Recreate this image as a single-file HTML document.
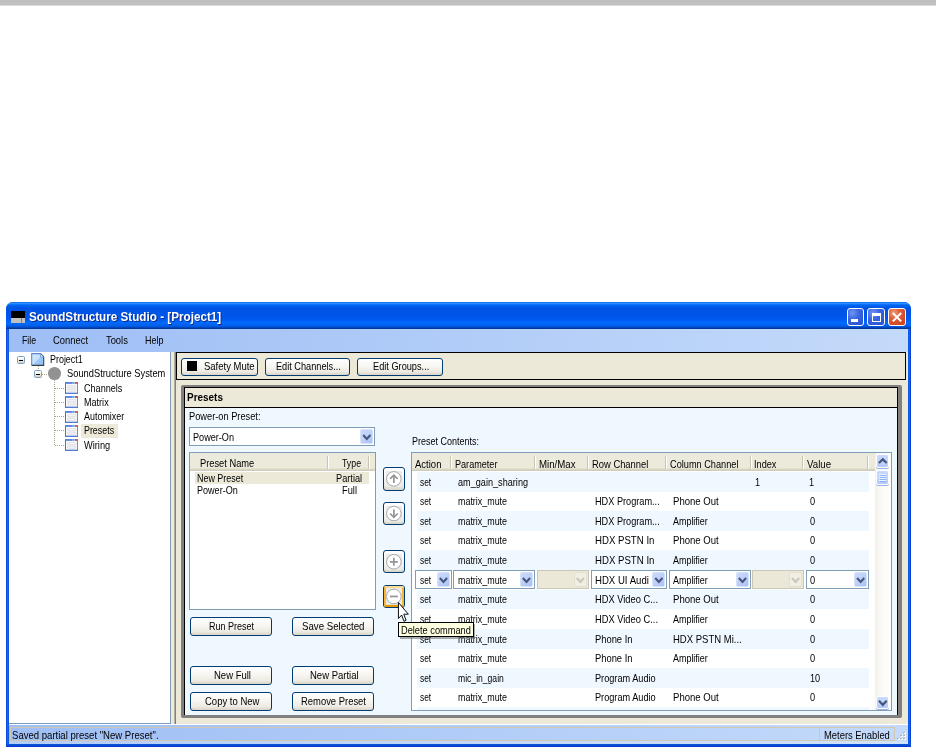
<!DOCTYPE html>
<html><head><meta charset="utf-8"><title>SoundStructure Studio - [Project1]</title>
<style>
html,body{margin:0;padding:0;background:#fff;}
body{width:936px;height:747px;position:relative;overflow:hidden;font-family:"Liberation Sans",sans-serif;font-size:10.5px;color:#000;}
div{box-sizing:border-box;}
#root{position:absolute;left:0;top:0;width:936px;height:747px;will-change:transform;}
.t{position:absolute;white-space:nowrap;line-height:14px;height:14px;transform-origin:0 50%;}
svg{position:absolute;overflow:visible;}
</style></head><body><div id="root">
<div style="position:absolute;left:0.00px;top:0.00px;width:936.00px;height:5.00px;background:#c0c0c0;"></div>
<div style="position:absolute;left:0.00px;top:5.00px;width:936.00px;height:1.00px;background:#dcdcdc;"></div>
<div style="position:absolute;left:6.00px;top:302.00px;width:905.00px;height:448.00px;background:#0a55e0;border-radius:7px 7px 0 0;"></div>
<div style="position:absolute;left:6.00px;top:302.00px;width:905.00px;height:27.00px;background:linear-gradient(to bottom,#0058ee 0%,#3593ff 4%,#288eff 6%,#127dff 8%,#036ffc 10%,#0262ee 14%,#0057e5 20%,#0054e3 24%,#0055eb 56%,#005bf5 66%,#026afe 76%,#0062ef 86%,#0052d6 92%,#0040ab 96%,#003092 100%);border-radius:7px 7px 0 0;"></div>
<div style="position:absolute;left:6.00px;top:329.00px;width:3.00px;height:418.00px;background:linear-gradient(to right,#0831d9 0%,#166aee 40%,#0855dd 100%);"></div>
<div style="position:absolute;left:908.00px;top:329.00px;width:3.00px;height:418.00px;background:linear-gradient(to right,#0855dd 0%,#166aee 40%,#0831d9 100%);"></div>
<div style="position:absolute;left:6.00px;top:744.00px;width:905.00px;height:3.00px;background:linear-gradient(to bottom,#0855dd 0%,#0a4ad0 50%,#0831d9 100%);"></div>
<div style="position:absolute;left:11.00px;top:311.00px;width:14.00px;height:7.00px;background:#000;"></div>
<div style="position:absolute;left:11.00px;top:318.00px;width:14.00px;height:5.00px;background:#c0c0c0;"></div>
<div style="position:absolute;left:21.00px;top:318.00px;width:1.30px;height:5.00px;background:#00e000;"></div>
<div class="t" style="left:28.80px;top:310.20px;font-size:12.60px;transform:scaleX(0.9279);font-weight:bold;color:#fff;text-shadow:1px 1px 0 #0a2a8a;">SoundStructure Studio - [Project1]</div>
<div style="position:absolute;left:846.60px;top:308.00px;width:17.60px;height:18.40px;background:radial-gradient(circle at 30% 25%,#6f97f5 0%,#3a66e0 40%,#2450d0 100%);border:1px solid #fff;border-radius:3px;"></div>
<div style="position:absolute;left:867.00px;top:308.00px;width:18.40px;height:18.40px;background:radial-gradient(circle at 30% 25%,#6f97f5 0%,#3a66e0 40%,#2450d0 100%);border:1px solid #fff;border-radius:3px;"></div>
<div style="position:absolute;left:887.60px;top:308.00px;width:18.00px;height:18.40px;background:radial-gradient(circle at 30% 25%,#f0a080 0%,#e0603a 35%,#c83a14 100%);border:1px solid #fff;border-radius:3px;"></div>
<div style="position:absolute;left:851.00px;top:319.00px;width:6.50px;height:3.00px;background:#fff;"></div>
<div style="position:absolute;left:871.50px;top:312.50px;width:9.50px;height:9.50px;border:1.2px solid #fff;border-top:3px solid #fff;"></div>
<svg style="left:887.6px;top:308px" width="18" height="18.4" viewBox="0 0 18 18.4"><path d="M4.8 5 L13.2 13.4 M13.2 5 L4.8 13.4" stroke="#fff" stroke-width="2" fill="none" stroke-linecap="butt"/></svg>
<div style="position:absolute;left:9.00px;top:329.00px;width:899.00px;height:22.50px;background:linear-gradient(to right,#9ebef5 0%,#c4dafa 100%);"></div>
<div class="t" style="left:22.00px;top:332.60px;font-size:10.50px;transform:scaleX(0.8296);">File</div>
<div class="t" style="left:52.50px;top:332.60px;font-size:10.50px;transform:scaleX(0.8946);">Connect</div>
<div class="t" style="left:105.70px;top:332.60px;font-size:10.50px;transform:scaleX(0.8898);">Tools</div>
<div class="t" style="left:144.50px;top:332.60px;font-size:10.50px;transform:scaleX(0.8555);">Help</div>
<div style="position:absolute;left:9.00px;top:351.50px;width:899.00px;height:372.50px;background:#ece9d8;"></div>
<div style="position:absolute;left:9.00px;top:351.50px;width:162.00px;height:372.00px;background:#fff;border:1px solid #7f9db9;border-top:none;border-left:none;"></div>
<div style="position:absolute;left:173.60px;top:352.00px;width:2.10px;height:371.50px;background:linear-gradient(to right,#d4d0c0 0%,#8a867a 60%,#77746a 100%);"></div>
<div style="position:absolute;left:17.20px;top:356.00px;width:8.00px;height:8.00px;border:1px solid #7b9ec4;background:linear-gradient(to bottom,#fff 0%,#f4f1ea 45%,#d6cfbb 100%);border-radius:1.5px;"></div>
<div style="position:absolute;left:19.20px;top:359.50px;width:4.00px;height:1.00px;background:#000;"></div>
<div style="position:absolute;left:34.20px;top:370.20px;width:8.00px;height:8.00px;border:1px solid #7b9ec4;background:linear-gradient(to bottom,#fff 0%,#f4f1ea 45%,#d6cfbb 100%);border-radius:1.5px;"></div>
<div style="position:absolute;left:36.20px;top:373.70px;width:4.00px;height:1.00px;background:#000;"></div>
<svg style="left:0;top:0" width="936" height="747"><g stroke="#a9a08a" stroke-width="1" stroke-dasharray="1 1" fill="none"><path d="M38.5 366 V370"/><path d="M42 374.5 H49"/><path d="M54.5 380 V445.5"/><path d="M55 388.5 H65"/><path d="M55 402.5 H65"/><path d="M55 416.5 H65"/><path d="M55 430.5 H65"/><path d="M55 445.5 H65"/></g></svg>
<svg style="left:31px;top:353px" width="13.4" height="13" viewBox="0 0 13.4 13"><defs><linearGradient id="pg" x1="0" y1="0" x2="1" y2="1"><stop offset="0" stop-color="#d4ebfd"/><stop offset="0.5" stop-color="#c4e0fc"/><stop offset="0.52" stop-color="#9ccafa"/><stop offset="1" stop-color="#8fc0f6"/></linearGradient></defs><path d="M1.2 1 H9.4 L12.3 3.9 V12.2 H1.2 Z" fill="url(#pg)"/><path d="M0.7 12.4 V0.6 H9.6" fill="none" stroke="#5a86d2" stroke-width="1.1"/><path d="M9.6 0.6 L12.7 3.8 V12.4 H0.7" fill="none" stroke="#3a3f4c" stroke-width="1.1"/><path d="M9.4 0.8 V4 H12.5 Z" fill="#fff" stroke="#5a86d2" stroke-width="0.7"/></svg>
<div style="position:absolute;left:48.00px;top:367.20px;width:13.10px;height:12.90px;background:#929292;border-radius:50%;"></div>
<svg style="left:65.00px;top:382.20px" width="13" height="12" viewBox="0 0 13 12"><rect x="0.5" y="0.5" width="12" height="10.8" fill="#f9f9fc" stroke="#6a8fdc" stroke-width="1"/><rect x="0" y="10.8" width="13" height="1" fill="#4672cc"/><rect x="0" y="0.3" width="1" height="11" fill="#4672cc"/><rect x="0.2" y="0.2" width="12.6" height="1.7" fill="#5685e2"/><rect x="7.4" y="0.6" width="0.9" height="0.9" fill="#fff"/><rect x="9" y="0.6" width="0.9" height="0.9" fill="#fff"/><rect x="10.6" y="0.2" width="2" height="1.6" fill="#e8503a"/><rect x="2.6" y="3.8" width="8.2" height="1.9" rx="0.6" fill="#fff" stroke="#d2d2da" stroke-width="0.8"/><rect x="2.6" y="7.2" width="8.2" height="1.9" rx="0.6" fill="#fff" stroke="#d2d2da" stroke-width="0.8"/></svg>
<svg style="left:65.00px;top:396.40px" width="13" height="12" viewBox="0 0 13 12"><rect x="0.5" y="0.5" width="12" height="10.8" fill="#f9f9fc" stroke="#6a8fdc" stroke-width="1"/><rect x="0" y="10.8" width="13" height="1" fill="#4672cc"/><rect x="0" y="0.3" width="1" height="11" fill="#4672cc"/><rect x="0.2" y="0.2" width="12.6" height="1.7" fill="#5685e2"/><rect x="7.4" y="0.6" width="0.9" height="0.9" fill="#fff"/><rect x="9" y="0.6" width="0.9" height="0.9" fill="#fff"/><rect x="10.6" y="0.2" width="2" height="1.6" fill="#e8503a"/><rect x="2.6" y="3.8" width="8.2" height="1.9" rx="0.6" fill="#fff" stroke="#d2d2da" stroke-width="0.8"/><rect x="2.6" y="7.2" width="8.2" height="1.9" rx="0.6" fill="#fff" stroke="#d2d2da" stroke-width="0.8"/></svg>
<svg style="left:65.00px;top:410.60px" width="13" height="12" viewBox="0 0 13 12"><rect x="0.5" y="0.5" width="12" height="10.8" fill="#f9f9fc" stroke="#6a8fdc" stroke-width="1"/><rect x="0" y="10.8" width="13" height="1" fill="#4672cc"/><rect x="0" y="0.3" width="1" height="11" fill="#4672cc"/><rect x="0.2" y="0.2" width="12.6" height="1.7" fill="#5685e2"/><rect x="7.4" y="0.6" width="0.9" height="0.9" fill="#fff"/><rect x="9" y="0.6" width="0.9" height="0.9" fill="#fff"/><rect x="10.6" y="0.2" width="2" height="1.6" fill="#e8503a"/><rect x="2.6" y="3.8" width="8.2" height="1.9" rx="0.6" fill="#fff" stroke="#d2d2da" stroke-width="0.8"/><rect x="2.6" y="7.2" width="8.2" height="1.9" rx="0.6" fill="#fff" stroke="#d2d2da" stroke-width="0.8"/></svg>
<svg style="left:65.00px;top:424.80px" width="13" height="12" viewBox="0 0 13 12"><rect x="0.5" y="0.5" width="12" height="10.8" fill="#f9f9fc" stroke="#6a8fdc" stroke-width="1"/><rect x="0" y="10.8" width="13" height="1" fill="#4672cc"/><rect x="0" y="0.3" width="1" height="11" fill="#4672cc"/><rect x="0.2" y="0.2" width="12.6" height="1.7" fill="#5685e2"/><rect x="7.4" y="0.6" width="0.9" height="0.9" fill="#fff"/><rect x="9" y="0.6" width="0.9" height="0.9" fill="#fff"/><rect x="10.6" y="0.2" width="2" height="1.6" fill="#e8503a"/><rect x="2.6" y="3.8" width="8.2" height="1.9" rx="0.6" fill="#fff" stroke="#d2d2da" stroke-width="0.8"/><rect x="2.6" y="7.2" width="8.2" height="1.9" rx="0.6" fill="#fff" stroke="#d2d2da" stroke-width="0.8"/></svg>
<svg style="left:65.00px;top:439.00px" width="13" height="12" viewBox="0 0 13 12"><rect x="0.5" y="0.5" width="12" height="10.8" fill="#f9f9fc" stroke="#6a8fdc" stroke-width="1"/><rect x="0" y="10.8" width="13" height="1" fill="#4672cc"/><rect x="0" y="0.3" width="1" height="11" fill="#4672cc"/><rect x="0.2" y="0.2" width="12.6" height="1.7" fill="#5685e2"/><rect x="7.4" y="0.6" width="0.9" height="0.9" fill="#fff"/><rect x="9" y="0.6" width="0.9" height="0.9" fill="#fff"/><rect x="10.6" y="0.2" width="2" height="1.6" fill="#e8503a"/><rect x="2.6" y="3.8" width="8.2" height="1.9" rx="0.6" fill="#fff" stroke="#d2d2da" stroke-width="0.8"/><rect x="2.6" y="7.2" width="8.2" height="1.9" rx="0.6" fill="#fff" stroke="#d2d2da" stroke-width="0.8"/></svg>
<div style="position:absolute;left:81.20px;top:424.40px;width:36.80px;height:13.20px;background:#ece9d8;"></div>
<div class="t" style="left:49.60px;top:352.30px;font-size:10.50px;transform:scaleX(0.8494);">Project1</div>
<div class="t" style="left:66.70px;top:366.40px;font-size:10.50px;transform:scaleX(0.8866);">SoundStructure System</div>
<div class="t" style="left:83.80px;top:380.60px;font-size:10.50px;transform:scaleX(0.8654);">Channels</div>
<div class="t" style="left:83.80px;top:394.90px;font-size:10.50px;transform:scaleX(0.8629);">Matrix</div>
<div class="t" style="left:83.80px;top:409.10px;font-size:10.50px;transform:scaleX(0.8508);">Automixer</div>
<div class="t" style="left:83.80px;top:423.30px;font-size:10.50px;transform:scaleX(0.8449);">Presets</div>
<div class="t" style="left:83.80px;top:437.60px;font-size:10.50px;transform:scaleX(0.8807);">Wiring</div>
<div style="position:absolute;left:175.50px;top:351.80px;width:730.50px;height:28.20px;background:#ece9d8;border:1.2px solid #000;"></div>
<div style="position:absolute;left:181.00px;top:357.50px;width:76.80px;height:18.00px;background:linear-gradient(to bottom,#ffffff 0%,#f7f6f1 45%,#eceae2 80%,#d9d4c6 100%);border:1px solid #003c74;border-radius:3px;"></div>
<div style="position:absolute;left:187.00px;top:361.00px;width:10.00px;height:10.00px;background:#000;"></div>
<div class="t" style="left:203.80px;top:358.60px;font-size:10.50px;transform:scaleX(0.9036);">Safety Mute</div>
<div style="position:absolute;left:265.00px;top:357.50px;width:85.00px;height:18.00px;background:linear-gradient(to bottom,#ffffff 0%,#f7f6f1 45%,#eceae2 80%,#d9d4c6 100%);border:1px solid #003c74;border-radius:3px;"></div>
<div class="t" style="left:276.20px;top:358.60px;font-size:10.50px;transform:scaleX(0.8742);">Edit Channels...</div>
<div style="position:absolute;left:357.00px;top:357.50px;width:85.80px;height:18.00px;background:linear-gradient(to bottom,#ffffff 0%,#f7f6f1 45%,#eceae2 80%,#d9d4c6 100%);border:1px solid #003c74;border-radius:3px;"></div>
<div class="t" style="left:372.50px;top:358.60px;font-size:10.50px;transform:scaleX(0.8763);">Edit Groups...</div>
<div style="position:absolute;left:181.00px;top:384.50px;width:721.00px;height:333.00px;background:#808080;border-radius:2px;"></div>
<div style="position:absolute;left:183.60px;top:387.00px;width:714.80px;height:327.60px;background:#000;"></div>
<div style="position:absolute;left:184.50px;top:388.00px;width:712.70px;height:326.60px;background:#f0f8ff;"></div>
<div style="position:absolute;left:184.50px;top:388.00px;width:712.70px;height:19.00px;background:#ece9d8;"></div>
<div style="position:absolute;left:184.50px;top:407.00px;width:712.70px;height:1.00px;background:#000;"></div>
<div class="t" style="left:187.00px;top:389.90px;font-size:10.50px;transform:scaleX(0.9474);font-weight:bold;">Presets</div>
<div class="t" style="left:189.00px;top:408.80px;font-size:10.50px;transform:scaleX(0.8814);">Power-on Preset:</div>
<div style="position:absolute;left:189.40px;top:427.10px;width:185.60px;height:18.90px;background:#fff;border:1px solid #7f9db9;"></div>
<div style="position:absolute;left:359.90px;top:428.60px;width:13.20px;height:15.60px;background:linear-gradient(135deg,#cbd9fc 0%,#bfd0fa 50%,#aabff6 100%);border:1px solid #d6e1fc;border-radius:2px;"></div>
<svg style="left:0;top:0" width="936" height="747"><path d="M363.20 434.95 L366.80 438.85 L370.40 434.95" stroke="#43567c" stroke-width="2.10" fill="none"/></svg>
<div class="t" style="left:193.00px;top:429.60px;font-size:10.50px;transform:scaleX(0.8677);">Power-On</div>
<div style="position:absolute;left:189.40px;top:452.30px;width:186.80px;height:158.00px;background:#fff;border:1px solid #7f9db9;"></div>
<div style="position:absolute;left:190.40px;top:453.30px;width:184.80px;height:18.20px;background:linear-gradient(to bottom,#ebeadb 0%,#ebeadb 82%,#e0dccb 88%,#d6d2c2 94%,#cbc7b8 100%);"></div>
<div style="position:absolute;left:327.00px;top:456.00px;width:1.00px;height:12.50px;background:#c9c5b2;"></div>
<div style="position:absolute;left:328.00px;top:456.00px;width:1.00px;height:12.50px;background:#fff;"></div>
<div style="position:absolute;left:367.50px;top:456.00px;width:1.00px;height:12.50px;background:#c9c5b2;"></div>
<div style="position:absolute;left:368.50px;top:456.00px;width:1.00px;height:12.50px;background:#fff;"></div>
<div class="t" style="left:199.80px;top:456.20px;font-size:10.50px;transform:scaleX(0.8849);">Preset Name</div>
<div class="t" style="left:341.50px;top:456.20px;font-size:10.50px;transform:scaleX(0.8352);">Type</div>
<div style="position:absolute;left:195.00px;top:472.40px;width:174.20px;height:11.40px;background:#ece9d8;"></div>
<div class="t" style="left:196.80px;top:470.90px;font-size:10.50px;transform:scaleX(0.8516);">New Preset</div>
<div class="t" style="left:336.40px;top:470.90px;font-size:10.50px;transform:scaleX(0.8773);">Partial</div>
<div class="t" style="left:196.80px;top:482.60px;font-size:10.50px;transform:scaleX(0.8614);">Power-On</div>
<div class="t" style="left:341.50px;top:482.60px;font-size:10.50px;transform:scaleX(0.8830);">Full</div>
<div style="position:absolute;left:190.00px;top:617.00px;width:82.00px;height:19.00px;background:linear-gradient(to bottom,#ffffff 0%,#f7f6f1 45%,#eceae2 80%,#d9d4c6 100%);border:1px solid #003c74;border-radius:3px;"></div>
<div class="t" style="left:208.50px;top:618.80px;font-size:10.50px;transform:scaleX(0.8571);">Run Preset</div>
<div style="position:absolute;left:292.00px;top:617.00px;width:82.00px;height:19.00px;background:linear-gradient(to bottom,#ffffff 0%,#f7f6f1 45%,#eceae2 80%,#d9d4c6 100%);border:1px solid #003c74;border-radius:3px;"></div>
<div class="t" style="left:301.50px;top:618.80px;font-size:10.50px;transform:scaleX(0.9225);">Save Selected</div>
<div style="position:absolute;left:190.00px;top:666.00px;width:82.00px;height:19.00px;background:linear-gradient(to bottom,#ffffff 0%,#f7f6f1 45%,#eceae2 80%,#d9d4c6 100%);border:1px solid #003c74;border-radius:3px;"></div>
<div class="t" style="left:213.50px;top:667.80px;font-size:10.50px;transform:scaleX(0.9052);">New Full</div>
<div style="position:absolute;left:292.00px;top:666.00px;width:82.00px;height:19.00px;background:linear-gradient(to bottom,#ffffff 0%,#f7f6f1 45%,#eceae2 80%,#d9d4c6 100%);border:1px solid #003c74;border-radius:3px;"></div>
<div class="t" style="left:309.50px;top:667.80px;font-size:10.50px;transform:scaleX(0.9044);">New Partial</div>
<div style="position:absolute;left:190.00px;top:692.00px;width:82.00px;height:19.00px;background:linear-gradient(to bottom,#ffffff 0%,#f7f6f1 45%,#eceae2 80%,#d9d4c6 100%);border:1px solid #003c74;border-radius:3px;"></div>
<div class="t" style="left:204.50px;top:693.80px;font-size:10.50px;transform:scaleX(0.9064);">Copy to New</div>
<div style="position:absolute;left:292.00px;top:692.00px;width:82.00px;height:19.00px;background:linear-gradient(to bottom,#ffffff 0%,#f7f6f1 45%,#eceae2 80%,#d9d4c6 100%);border:1px solid #003c74;border-radius:3px;"></div>
<div class="t" style="left:300.50px;top:693.80px;font-size:10.50px;transform:scaleX(0.8981);">Remove Preset</div>
<div style="position:absolute;left:382.70px;top:467.00px;width:22.30px;height:23.80px;background:linear-gradient(to bottom,#ffffff 0%,#f7f6f1 45%,#eceae2 80%,#d9d4c6 100%);border:1px solid #003c74;border-radius:3px;"></div>
<div style="position:absolute;left:385.85px;top:470.90px;width:16.00px;height:16.00px;background:#ebebeb;"></div>
<svg style="left:0;top:0" width="936" height="747"><circle cx="393.85" cy="478.90" r="7.3" fill="#fff" stroke="#a8a8a8" stroke-width="1"/><path d="M393.85 475.30 V482.90 M390.05 478.90 L393.85 475.10 L397.65 478.90" stroke="#959595" stroke-width="1.7" fill="none"/></svg>
<div style="position:absolute;left:382.70px;top:502.20px;width:22.30px;height:22.60px;background:linear-gradient(to bottom,#ffffff 0%,#f7f6f1 45%,#eceae2 80%,#d9d4c6 100%);border:1px solid #003c74;border-radius:3px;"></div>
<div style="position:absolute;left:385.85px;top:505.50px;width:16.00px;height:16.00px;background:#ebebeb;"></div>
<svg style="left:0;top:0" width="936" height="747"><circle cx="393.85" cy="513.50" r="7.3" fill="#fff" stroke="#a8a8a8" stroke-width="1"/><path d="M393.85 509.50 V517.10 M390.05 513.50 L393.85 517.30 L397.65 513.50" stroke="#959595" stroke-width="1.7" fill="none"/></svg>
<div style="position:absolute;left:382.70px;top:550.30px;width:22.30px;height:23.00px;background:linear-gradient(to bottom,#ffffff 0%,#f7f6f1 45%,#eceae2 80%,#d9d4c6 100%);border:1px solid #003c74;border-radius:3px;"></div>
<div style="position:absolute;left:385.85px;top:553.80px;width:16.00px;height:16.00px;background:#ebebeb;"></div>
<svg style="left:0;top:0" width="936" height="747"><circle cx="393.85" cy="561.80" r="7.3" fill="#fff" stroke="#a8a8a8" stroke-width="1"/><path d="M389.85 561.80 H397.85 M393.85 557.80 V565.80" stroke="#959595" stroke-width="1.7" fill="none"/></svg>
<div style="position:absolute;left:382.70px;top:585.30px;width:22.30px;height:22.30px;background:linear-gradient(to bottom,#ffffff 0%,#f7f6f1 45%,#eceae2 80%,#d9d4c6 100%);border:1px solid #003c74;border-radius:3px;"></div>
<div style="position:absolute;left:383.70px;top:586.30px;width:20.30px;height:20.30px;border:2px solid #f8b636;border-top-color:#fddc92;border-bottom-color:#e59700;border-radius:2px;"></div>
<div style="position:absolute;left:385.85px;top:588.45px;width:16.00px;height:16.00px;background:#ebebeb;"></div>
<svg style="left:0;top:0" width="936" height="747"><circle cx="393.85" cy="596.45" r="7.3" fill="#fff" stroke="#a8a8a8" stroke-width="1"/><path d="M389.85 596.45 H397.85" stroke="#959595" stroke-width="1.7" fill="none"/></svg>
<div class="t" style="left:411.80px;top:434.30px;font-size:10.50px;transform:scaleX(0.8562);">Preset Contents:</div>
<div style="position:absolute;left:411.40px;top:452.30px;width:480.80px;height:258.70px;background:#fff;border:1px solid #7f9db9;"></div>
<div style="position:absolute;left:412.40px;top:453.30px;width:462.80px;height:18.20px;background:linear-gradient(to bottom,#ebeadb 0%,#ebeadb 82%,#e0dccb 88%,#d6d2c2 94%,#cbc7b8 100%);"></div>
<div style="position:absolute;left:449.80px;top:456.00px;width:1.00px;height:12.50px;background:#c9c5b2;"></div>
<div style="position:absolute;left:450.80px;top:456.00px;width:1.00px;height:12.50px;background:#fff;"></div>
<div style="position:absolute;left:533.50px;top:456.00px;width:1.00px;height:12.50px;background:#c9c5b2;"></div>
<div style="position:absolute;left:534.50px;top:456.00px;width:1.00px;height:12.50px;background:#fff;"></div>
<div style="position:absolute;left:587.00px;top:456.00px;width:1.00px;height:12.50px;background:#c9c5b2;"></div>
<div style="position:absolute;left:588.00px;top:456.00px;width:1.00px;height:12.50px;background:#fff;"></div>
<div style="position:absolute;left:665.20px;top:456.00px;width:1.00px;height:12.50px;background:#c9c5b2;"></div>
<div style="position:absolute;left:666.20px;top:456.00px;width:1.00px;height:12.50px;background:#fff;"></div>
<div style="position:absolute;left:749.60px;top:456.00px;width:1.00px;height:12.50px;background:#c9c5b2;"></div>
<div style="position:absolute;left:750.60px;top:456.00px;width:1.00px;height:12.50px;background:#fff;"></div>
<div style="position:absolute;left:802.20px;top:456.00px;width:1.00px;height:12.50px;background:#c9c5b2;"></div>
<div style="position:absolute;left:803.20px;top:456.00px;width:1.00px;height:12.50px;background:#fff;"></div>
<div style="position:absolute;left:867.20px;top:456.00px;width:1.00px;height:12.50px;background:#c9c5b2;"></div>
<div style="position:absolute;left:868.20px;top:456.00px;width:1.00px;height:12.50px;background:#fff;"></div>
<div class="t" style="left:415.40px;top:456.80px;font-size:10.50px;transform:scaleX(0.9064);">Action</div>
<div class="t" style="left:454.60px;top:456.80px;font-size:10.50px;transform:scaleX(0.8653);">Parameter</div>
<div class="t" style="left:538.50px;top:456.80px;font-size:10.50px;transform:scaleX(0.9211);">Min/Max</div>
<div class="t" style="left:591.70px;top:456.80px;font-size:10.50px;transform:scaleX(0.8937);">Row Channel</div>
<div class="t" style="left:670.00px;top:456.80px;font-size:10.50px;transform:scaleX(0.8754);">Column Channel</div>
<div class="t" style="left:753.80px;top:456.80px;font-size:10.50px;transform:scaleX(0.8738);">Index</div>
<div class="t" style="left:806.70px;top:456.80px;font-size:10.50px;transform:scaleX(0.9225);">Value</div>
<div style="position:absolute;left:417.20px;top:472.00px;width:451.60px;height:19.62px;background:#f0f8ff;"></div>
<div style="position:absolute;left:417.20px;top:511.24px;width:451.60px;height:19.62px;background:#f0f8ff;"></div>
<div style="position:absolute;left:417.20px;top:550.48px;width:451.60px;height:19.62px;background:#f0f8ff;"></div>
<div style="position:absolute;left:417.20px;top:589.72px;width:451.60px;height:19.62px;background:#f0f8ff;"></div>
<div style="position:absolute;left:417.20px;top:628.96px;width:451.60px;height:19.62px;background:#f0f8ff;"></div>
<div style="position:absolute;left:417.20px;top:668.20px;width:451.60px;height:19.62px;background:#f0f8ff;"></div>
<div style="position:absolute;left:417.20px;top:707.44px;width:451.60px;height:2.56px;background:#f0f8ff;"></div>
<div style="position:absolute;left:415.00px;top:570.40px;width:36.60px;height:18.40px;background:#fff;border:1px solid #7f9db9;"></div>
<div style="position:absolute;left:436.60px;top:571.90px;width:13.10px;height:15.10px;background:linear-gradient(135deg,#cbd9fc 0%,#bfd0fa 50%,#aabff6 100%);border:1px solid #d6e1fc;border-radius:2px;"></div>
<svg style="left:0;top:0" width="936" height="747"><path d="M439.85 578.00 L443.45 581.90 L447.05 578.00" stroke="#43567c" stroke-width="2.10" fill="none"/></svg>
<div style="position:absolute;left:453.30px;top:570.40px;width:81.30px;height:18.40px;background:#fff;border:1px solid #7f9db9;"></div>
<div style="position:absolute;left:519.60px;top:571.90px;width:13.10px;height:15.10px;background:linear-gradient(135deg,#cbd9fc 0%,#bfd0fa 50%,#aabff6 100%);border:1px solid #d6e1fc;border-radius:2px;"></div>
<svg style="left:0;top:0" width="936" height="747"><path d="M522.85 578.00 L526.45 581.90 L530.05 578.00" stroke="#43567c" stroke-width="2.10" fill="none"/></svg>
<div style="position:absolute;left:536.70px;top:570.40px;width:52.10px;height:18.40px;background:#ebe8d7;border:1px solid #c9c7ba;"></div>
<div style="position:absolute;left:573.80px;top:571.90px;width:13.10px;height:15.10px;background:#f1efe3;border:1px solid #e3e0d2;border-radius:2px;"></div>
<svg style="left:0;top:0" width="936" height="747"><path d="M576.75 578.00 L580.35 581.90 L583.95 578.00" stroke="#c9c7ba" stroke-width="2.10" fill="none"/></svg>
<div style="position:absolute;left:590.50px;top:570.40px;width:76.50px;height:18.40px;background:#fff;border:1px solid #7f9db9;"></div>
<div style="position:absolute;left:652.00px;top:571.90px;width:13.10px;height:15.10px;background:linear-gradient(135deg,#cbd9fc 0%,#bfd0fa 50%,#aabff6 100%);border:1px solid #d6e1fc;border-radius:2px;"></div>
<svg style="left:0;top:0" width="936" height="747"><path d="M655.25 578.00 L658.85 581.90 L662.45 578.00" stroke="#43567c" stroke-width="2.10" fill="none"/></svg>
<div style="position:absolute;left:669.00px;top:570.40px;width:81.60px;height:18.40px;background:#fff;border:1px solid #7f9db9;"></div>
<div style="position:absolute;left:735.60px;top:571.90px;width:13.10px;height:15.10px;background:linear-gradient(135deg,#cbd9fc 0%,#bfd0fa 50%,#aabff6 100%);border:1px solid #d6e1fc;border-radius:2px;"></div>
<svg style="left:0;top:0" width="936" height="747"><path d="M738.85 578.00 L742.45 581.90 L746.05 578.00" stroke="#43567c" stroke-width="2.10" fill="none"/></svg>
<div style="position:absolute;left:752.30px;top:570.40px;width:51.70px;height:18.40px;background:#ebe8d7;border:1px solid #c9c7ba;"></div>
<div style="position:absolute;left:789.00px;top:571.90px;width:13.10px;height:15.10px;background:#f1efe3;border:1px solid #e3e0d2;border-radius:2px;"></div>
<svg style="left:0;top:0" width="936" height="747"><path d="M791.95 578.00 L795.55 581.90 L799.15 578.00" stroke="#c9c7ba" stroke-width="2.10" fill="none"/></svg>
<div style="position:absolute;left:806.00px;top:570.40px;width:62.80px;height:18.40px;background:#fff;border:1px solid #7f9db9;"></div>
<div style="position:absolute;left:853.80px;top:571.90px;width:13.10px;height:15.10px;background:linear-gradient(135deg,#cbd9fc 0%,#bfd0fa 50%,#aabff6 100%);border:1px solid #d6e1fc;border-radius:2px;"></div>
<svg style="left:0;top:0" width="936" height="747"><path d="M857.05 578.00 L860.65 581.90 L864.25 578.00" stroke="#43567c" stroke-width="2.10" fill="none"/></svg>
<div class="t" style="left:419.60px;top:474.60px;font-size:10.50px;transform:scaleX(0.8000);">set</div>
<div class="t" style="left:457.70px;top:474.60px;font-size:10.50px;transform:scaleX(0.8696);">am_gain_sharing</div>
<div class="t" style="left:755.20px;top:474.60px;font-size:10.50px;transform:scaleX(0.8800);">1</div>
<div class="t" style="left:809.00px;top:474.60px;font-size:10.50px;transform:scaleX(0.8800);">1</div>
<div class="t" style="left:419.60px;top:494.22px;font-size:10.50px;transform:scaleX(0.8000);">set</div>
<div class="t" style="left:457.70px;top:494.22px;font-size:10.50px;transform:scaleX(0.8485);">matrix_mute</div>
<div class="t" style="left:594.60px;top:494.22px;font-size:10.50px;transform:scaleX(0.8728);">HDX Program...</div>
<div class="t" style="left:672.50px;top:494.22px;font-size:10.50px;transform:scaleX(0.9114);">Phone Out</div>
<div class="t" style="left:809.80px;top:494.22px;font-size:10.50px;transform:scaleX(0.8800);">0</div>
<div class="t" style="left:419.60px;top:513.84px;font-size:10.50px;transform:scaleX(0.8000);">set</div>
<div class="t" style="left:457.70px;top:513.84px;font-size:10.50px;transform:scaleX(0.8485);">matrix_mute</div>
<div class="t" style="left:594.60px;top:513.84px;font-size:10.50px;transform:scaleX(0.8728);">HDX Program...</div>
<div class="t" style="left:672.50px;top:513.84px;font-size:10.50px;transform:scaleX(0.8514);">Amplifier</div>
<div class="t" style="left:809.80px;top:513.84px;font-size:10.50px;transform:scaleX(0.8800);">0</div>
<div class="t" style="left:419.60px;top:533.46px;font-size:10.50px;transform:scaleX(0.8000);">set</div>
<div class="t" style="left:457.70px;top:533.46px;font-size:10.50px;transform:scaleX(0.8485);">matrix_mute</div>
<div class="t" style="left:594.60px;top:533.46px;font-size:10.50px;transform:scaleX(0.9174);">HDX PSTN In</div>
<div class="t" style="left:672.50px;top:533.46px;font-size:10.50px;transform:scaleX(0.9114);">Phone Out</div>
<div class="t" style="left:809.80px;top:533.46px;font-size:10.50px;transform:scaleX(0.8800);">0</div>
<div class="t" style="left:419.60px;top:553.08px;font-size:10.50px;transform:scaleX(0.8000);">set</div>
<div class="t" style="left:457.70px;top:553.08px;font-size:10.50px;transform:scaleX(0.8485);">matrix_mute</div>
<div class="t" style="left:594.60px;top:553.08px;font-size:10.50px;transform:scaleX(0.9174);">HDX PSTN In</div>
<div class="t" style="left:672.50px;top:553.08px;font-size:10.50px;transform:scaleX(0.8514);">Amplifier</div>
<div class="t" style="left:809.80px;top:553.08px;font-size:10.50px;transform:scaleX(0.8800);">0</div>
<div class="t" style="left:419.60px;top:572.70px;font-size:10.50px;transform:scaleX(0.8000);">set</div>
<div class="t" style="left:457.70px;top:572.70px;font-size:10.50px;transform:scaleX(0.8485);">matrix_mute</div>
<div class="t" style="left:594.60px;top:572.70px;font-size:10.50px;transform:scaleX(0.9136);">HDX UI Audi</div>
<div class="t" style="left:672.50px;top:572.70px;font-size:10.50px;transform:scaleX(0.8514);">Amplifier</div>
<div class="t" style="left:809.80px;top:572.70px;font-size:10.50px;transform:scaleX(0.8800);">0</div>
<div class="t" style="left:419.60px;top:592.32px;font-size:10.50px;transform:scaleX(0.8000);">set</div>
<div class="t" style="left:457.70px;top:592.32px;font-size:10.50px;transform:scaleX(0.8485);">matrix_mute</div>
<div class="t" style="left:594.60px;top:592.32px;font-size:10.50px;transform:scaleX(0.8873);">HDX Video C...</div>
<div class="t" style="left:672.50px;top:592.32px;font-size:10.50px;transform:scaleX(0.9114);">Phone Out</div>
<div class="t" style="left:809.80px;top:592.32px;font-size:10.50px;transform:scaleX(0.8800);">0</div>
<div class="t" style="left:419.60px;top:611.94px;font-size:10.50px;transform:scaleX(0.8000);">set</div>
<div class="t" style="left:457.70px;top:611.94px;font-size:10.50px;transform:scaleX(0.8485);">matrix_mute</div>
<div class="t" style="left:594.60px;top:611.94px;font-size:10.50px;transform:scaleX(0.8873);">HDX Video C...</div>
<div class="t" style="left:672.50px;top:611.94px;font-size:10.50px;transform:scaleX(0.8514);">Amplifier</div>
<div class="t" style="left:809.80px;top:611.94px;font-size:10.50px;transform:scaleX(0.8800);">0</div>
<div class="t" style="left:419.60px;top:631.56px;font-size:10.50px;transform:scaleX(0.8000);">set</div>
<div class="t" style="left:457.70px;top:631.56px;font-size:10.50px;transform:scaleX(0.8485);">matrix_mute</div>
<div class="t" style="left:594.60px;top:631.56px;font-size:10.50px;transform:scaleX(0.8905);">Phone In</div>
<div class="t" style="left:672.50px;top:631.56px;font-size:10.50px;transform:scaleX(0.9054);">HDX PSTN Mi...</div>
<div class="t" style="left:809.80px;top:631.56px;font-size:10.50px;transform:scaleX(0.8800);">0</div>
<div class="t" style="left:419.60px;top:651.18px;font-size:10.50px;transform:scaleX(0.8000);">set</div>
<div class="t" style="left:457.70px;top:651.18px;font-size:10.50px;transform:scaleX(0.8485);">matrix_mute</div>
<div class="t" style="left:594.60px;top:651.18px;font-size:10.50px;transform:scaleX(0.8905);">Phone In</div>
<div class="t" style="left:672.50px;top:651.18px;font-size:10.50px;transform:scaleX(0.8514);">Amplifier</div>
<div class="t" style="left:809.80px;top:651.18px;font-size:10.50px;transform:scaleX(0.8800);">0</div>
<div class="t" style="left:419.60px;top:670.80px;font-size:10.50px;transform:scaleX(0.8000);">set</div>
<div class="t" style="left:457.70px;top:670.80px;font-size:10.50px;transform:scaleX(0.8179);">mic_in_gain</div>
<div class="t" style="left:594.60px;top:670.80px;font-size:10.50px;transform:scaleX(0.8734);">Program Audio</div>
<div class="t" style="left:809.60px;top:670.80px;font-size:10.50px;transform:scaleX(0.8688);">10</div>
<div class="t" style="left:419.60px;top:690.42px;font-size:10.50px;transform:scaleX(0.8000);">set</div>
<div class="t" style="left:457.70px;top:690.42px;font-size:10.50px;transform:scaleX(0.8485);">matrix_mute</div>
<div class="t" style="left:594.60px;top:690.42px;font-size:10.50px;transform:scaleX(0.8734);">Program Audio</div>
<div class="t" style="left:672.50px;top:690.42px;font-size:10.50px;transform:scaleX(0.9114);">Phone Out</div>
<div class="t" style="left:809.80px;top:690.42px;font-size:10.50px;transform:scaleX(0.8800);">0</div>
<div style="position:absolute;left:875.20px;top:453.30px;width:16.00px;height:256.70px;background:linear-gradient(to right,#f3f1ec 0%,#fbfbf8 50%,#fefefb 100%);"></div>
<div style="position:absolute;left:876.30px;top:454.40px;width:12.70px;height:13.60px;background:linear-gradient(to bottom,#c9d9fd 0%,#c1d3fc 60%,#b4c7f7 100%);border:1px solid #fff;border-radius:2.5px;box-shadow:0 1px 0 #98b0e4;"></div>
<svg style="left:0;top:0" width="936" height="747"><path d="M886.70 462.95 L882.80 459.35 L878.90 462.95" stroke="#43567c" stroke-width="2.20" fill="none"/></svg>
<div style="position:absolute;left:876.30px;top:469.80px;width:12.70px;height:15.40px;background:linear-gradient(to bottom,#c9d9fd 0%,#c1d3fc 60%,#b4c7f7 100%);border:1px solid #fff;border-radius:2.5px;box-shadow:0 1px 0 #98b0e4;"></div>
<div style="position:absolute;left:879.40px;top:474.20px;width:6.60px;height:1.00px;background:#eef4fe;"></div>
<div style="position:absolute;left:879.90px;top:475.20px;width:6.50px;height:1.00px;background:#8cb0f8;"></div>
<div style="position:absolute;left:879.40px;top:476.20px;width:6.60px;height:1.00px;background:#eef4fe;"></div>
<div style="position:absolute;left:879.90px;top:477.20px;width:6.50px;height:1.00px;background:#8cb0f8;"></div>
<div style="position:absolute;left:879.40px;top:478.20px;width:6.60px;height:1.00px;background:#eef4fe;"></div>
<div style="position:absolute;left:879.90px;top:479.20px;width:6.50px;height:1.00px;background:#8cb0f8;"></div>
<div style="position:absolute;left:879.40px;top:480.20px;width:6.60px;height:1.00px;background:#eef4fe;"></div>
<div style="position:absolute;left:879.90px;top:481.20px;width:6.50px;height:1.00px;background:#8cb0f8;"></div>
<div style="position:absolute;left:876.30px;top:696.00px;width:12.70px;height:13.30px;background:linear-gradient(to bottom,#c9d9fd 0%,#c1d3fc 60%,#b4c7f7 100%);border:1px solid #fff;border-radius:2.5px;box-shadow:0 1px 0 #98b0e4;"></div>
<svg style="left:0;top:0" width="936" height="747"><path d="M878.90 700.65 L882.80 704.85 L886.70 700.65" stroke="#43567c" stroke-width="2.20" fill="none"/></svg>
<div style="position:absolute;left:399.50px;top:624.00px;width:75.50px;height:14.60px;background:#6e6e6e;opacity:0.55;"></div>
<div style="position:absolute;left:398.00px;top:622.00px;width:75.80px;height:15.40px;background:#ffffe1;border:1px solid #000;"></div>
<div class="t" style="left:400.80px;top:622.60px;font-size:10.50px;transform:scaleX(0.8806);">Delete command</div>
<svg style="left:398px;top:602.4px" width="11.4" height="21" viewBox="0 0 13 21" preserveAspectRatio="none"><path d="M0.5 0.5 V16.5 L4.2 13 L6.8 19.3 L9.2 18.3 L6.6 12.2 H11.8 Z" fill="#fff" stroke="#000" stroke-width="1" stroke-linejoin="miter"/></svg>
<div style="position:absolute;left:9.00px;top:724.00px;width:899.00px;height:20.00px;background:linear-gradient(to right,#9ebef5 0%,#c4dafa 100%);"></div>
<div style="position:absolute;left:9.00px;top:724.00px;width:899.00px;height:1.00px;background:#fff;"></div>
<div style="position:absolute;left:9.00px;top:741.20px;width:899.00px;height:2.80px;background:linear-gradient(to right,#b4cdf7 0%,#d0e2fb 100%);"></div>
<div style="position:absolute;left:10.00px;top:727.40px;width:809.60px;height:14.00px;border:1px solid #cfc8ae;border-right:none;"></div>
<div style="position:absolute;left:819.40px;top:727.40px;width:75.40px;height:14.00px;border:1px solid #cfc8ae;"></div>
<div class="t" style="left:12.40px;top:727.60px;font-size:10.50px;transform:scaleX(0.9106);">Saved partial preset &quot;New Preset&quot;.</div>
<div class="t" style="left:823.60px;top:727.60px;font-size:10.50px;transform:scaleX(0.8952);">Meters Enabled</div>
<div style="position:absolute;left:903.80px;top:732.30px;width:1.80px;height:1.80px;background:#fff;"></div>
<div style="position:absolute;left:903.00px;top:731.50px;width:1.80px;height:1.80px;background:#b8b09a;"></div>
<div style="position:absolute;left:900.80px;top:735.30px;width:1.80px;height:1.80px;background:#fff;"></div>
<div style="position:absolute;left:900.00px;top:734.50px;width:1.80px;height:1.80px;background:#b8b09a;"></div>
<div style="position:absolute;left:903.80px;top:735.30px;width:1.80px;height:1.80px;background:#fff;"></div>
<div style="position:absolute;left:903.00px;top:734.50px;width:1.80px;height:1.80px;background:#b8b09a;"></div>
<div style="position:absolute;left:897.80px;top:738.30px;width:1.80px;height:1.80px;background:#fff;"></div>
<div style="position:absolute;left:897.00px;top:737.50px;width:1.80px;height:1.80px;background:#b8b09a;"></div>
<div style="position:absolute;left:900.80px;top:738.30px;width:1.80px;height:1.80px;background:#fff;"></div>
<div style="position:absolute;left:900.00px;top:737.50px;width:1.80px;height:1.80px;background:#b8b09a;"></div>
<div style="position:absolute;left:903.80px;top:738.30px;width:1.80px;height:1.80px;background:#fff;"></div>
<div style="position:absolute;left:903.00px;top:737.50px;width:1.80px;height:1.80px;background:#b8b09a;"></div>
</div></body></html>
